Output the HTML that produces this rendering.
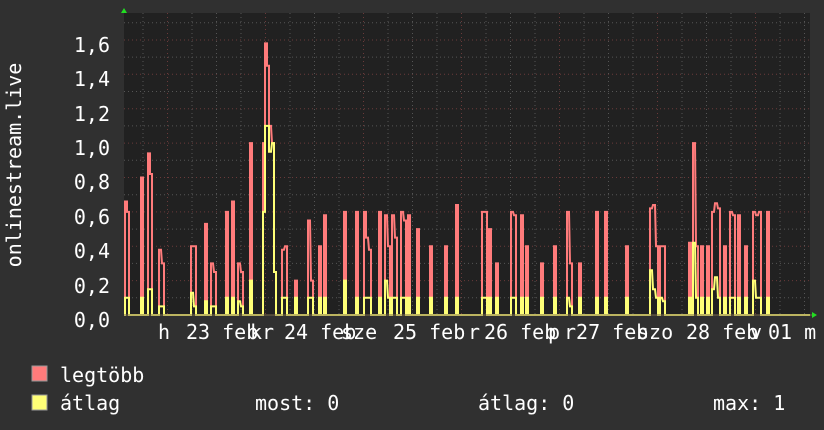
<!DOCTYPE html>
<html><head><meta charset="utf-8"><style>
html,body{margin:0;padding:0;background:#303030;}
svg{display:block}
text{font-family:"DejaVu Sans Mono","Liberation Mono",monospace;fill:#fff;}
</style></head><body>
<svg id="g" width="824" height="430" xmlns="http://www.w3.org/2000/svg">
<rect width="824" height="430" fill="#303030"/>
<rect x="124" y="13" width="686" height="302" fill="#212121"/>
<g id="grid"></g>
<path id="red" fill="none" stroke="#ff7b7b" stroke-width="2" stroke-linejoin="miter"/>
<path id="yel" fill="none" stroke="#ffff77" stroke-width="2"/>
<line x1="124" y1="315" x2="812" y2="315" stroke="#7a6a4a" stroke-width="1"/>
<polygon points="121,13 127,13 124,8" fill="#22dd22"/>
<polygon points="812,312 812,318 817,315" fill="#22dd22"/>
<g font-size="20" text-anchor="end">
<text x="110" y="52">1,6</text><text x="110" y="86">1,4</text><text x="110" y="121">1,2</text>
<text x="110" y="155">1,0</text><text x="110" y="189">0,8</text><text x="110" y="224">0,6</text>
<text x="110" y="258">0,4</text><text x="110" y="293">0,2</text><text x="110" y="327">0,0</text>
</g>
<text transform="translate(21,165) rotate(-90)" font-size="20" text-anchor="middle">onlinestream.live</text>
<g font-size="20">
<text x="158" y="339">h</text><text x="186" y="339">23 feb</text><text x="250" y="339">kr</text>
<text x="284" y="339">24 feb</text><text x="341" y="339">sze</text><text x="393" y="339">25 feb</text>
<text x="468" y="339">r</text><text x="484" y="339">26 feb</text><text x="548" y="339">p</text>
<text x="564" y="339">r27 feb</text><text x="637" y="339">szo</text><text x="686" y="339">28 feb</text>
<text x="750" y="339">v</text><text x="768" y="339">01 m</text>
</g>
<rect x="32" y="366" width="15" height="15" fill="#ff7b7b" stroke="#999" stroke-width="1"/>
<rect x="32" y="395" width="15" height="15" fill="#ffff77" stroke="#999" stroke-width="1"/>
<g font-size="20">
<text x="60" y="382">legtöbb</text><text x="60" y="410">átlag</text>
<text x="255" y="410">most: 0</text><text x="478" y="410">átlag: 0</text><text x="713" y="410">max: 1</text>
</g>
</svg>
<script>
var Y=function(v){return 315-v*171.9;};
var g=document.getElementById('grid'),s='';
for(var v=0.1;v<1.75;v+=0.1){var y=Y(v).toFixed(1);var maj=Math.round(v*10)%2==0;
s+='<line x1="124" x2="810" y1="'+y+'" y2="'+y+'" stroke="'+(maj?'#6a3a3a':'#555')+'" stroke-dasharray="1,3"/>';}
for(var x=143;x<810;x+=24.5){var maj=Math.abs(((x-167)/98)-Math.round((x-167)/98))<0.05;
s+='<line y1="13" y2="315" x1="'+x+'" x2="'+x+'" stroke="'+(maj?'#6a3a3a':'#555')+'" stroke-dasharray="1,3"/>';}
g.innerHTML=s;
var sp=[[126,.66,.1],[128,.6,.1],[142,.8,.1],[149,.94,.15],[151,.82,.15],[160,.38,.05],[163,.3,.05],[192,.4,.13],[195,.4,.05],[206,.53,.08],[212,.3,.05],[215,.25,.05],[227,.6,.1],[233,.66,.1],[239,.3,.08],[242,.25,.05],[251,1.0,.2],[264,1.0,.6],[266,1.58,1.1],[268,1.45,1.1],[270,1.1,.95],[273,1.0,1.0],[275,.25,.25],[283,.38,.1],[286,.4,.1],[296,.2,.1],[309,.55,.1],[312,.2,.1],[320,.4,.1],[325,.58,.1],[345,.6,.2],[357,.6,.1],[365,.6,.1],[367,.45,.1],[370,.38,.1],[380,.6,.1],[386,.58,.2],[389,.4,.1],[393,.58,.1],[396,.45,.1],[402,.6,.1],[405,.55,.1],[409,.58,.1],[418,.5,.1],[431,.4,.1],[446,.4,.1],[457,.64,.1],[483,.6,.1],[486,.6,.1],[490,.5,.1],[497,.3,.1],[512,.6,.1],[515,.58,.1],[522,.58,.1],[527,.4,.1],[542,.3,.1],[555,.4,.1],[568,.6,.1],[571,.3,.05],[580,.3,.1],[597,.6,.1],[606,.6,.1],[627,.4,.1],[651,.62,.26],[654,.64,.15],[657,.4,.1],[661,.4,.1],[664,.4,.08],[690,.42,.1],[694,1.0,.42],[697,.4,.1],[702,.4,.1],[708,.4,.1],[713,.6,.15],[716,.65,.22],[719,.62,.1],[725,.4,.1],[731,.6,.1],[734,.58,.1],[739,.58,.1],[746,.4,.1],[754,.6,.2],[757,.58,.1],[760,.6,.1],[768,.6,.1]];
function build(i){var d='M124 315',prev=null;
sp.forEach(function(p){var x=p[0],v=p[i],y=Y(v).toFixed(1);
if(prev!==null&&x-prev<=3){d+=' L'+(x-1)+' '+y+' L'+(x+1)+' '+y;}
else{d+=' L'+(x-1)+' 315 L'+(x-1)+' '+y+' L'+(x+1)+' '+y;}
var nxt=sp[sp.indexOf(p)+1];
if(!nxt||nxt[0]-x>3)d+=' L'+(x+1)+' 315';
prev=x;});
return d+' L810 315';}
document.getElementById('red').setAttribute('d',build(1));
document.getElementById('yel').setAttribute('d',build(2));
</script>
</body></html>
